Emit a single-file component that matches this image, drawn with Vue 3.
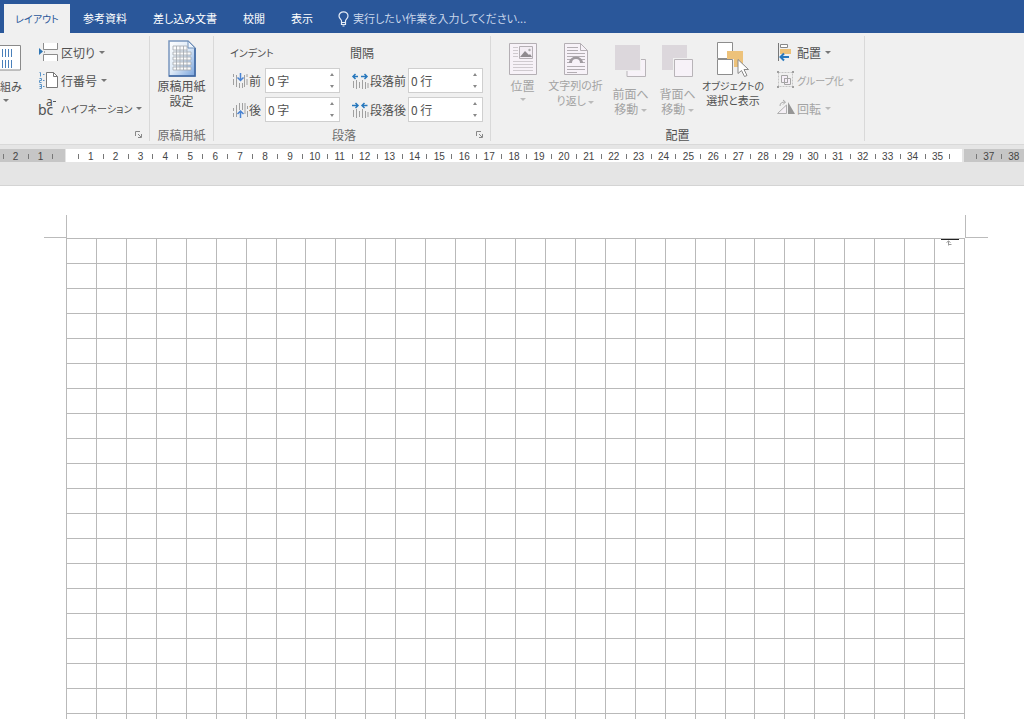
<script setup>
import { ref } from 'vue'

const tabs = ['参考資料', '差し込み文書', '校閲', '表示']

const indentBefore = ref('0 字')
const indentAfter = ref('0 字')
const spaceBefore = ref('0 行')
const spaceAfter = ref('0 行')

const withTicks = (from, to) => {
  const marks = ['tick']
  for (let n = from; n <= to; n++) marks.push(n, 'tick')
  return marks
}
const leftMarks = ['tick', 2, 'tick', 1, 'tick']
const bodyMarks = withTicks(1, 35)
const rightMarks = ['tick', 37, 'tick', 38]

const columns = 30
const rows = 20
</script>

<template>
  <div class="app">
    <nav class="tabs" aria-label="リボン タブ">
      <button class="tab active" type="button">レイアウト</button>
      <button v-for="t in tabs" :key="t" class="tab" type="button">{{ t }}</button>
      <label class="tell">
        <svg width="11" height="16" viewBox="0 0 11 16" fill="none" stroke="#e6edf7" stroke-width="1.2">
          <path d="M3.5 11.5V10C3.5 8.5 1 7.500 1 5a4.500 4.200 0 0 1 9 0C10 7.500 7.500 8.500 7.500 10v1.500zM3.500 11.500v2h4v-2M4.500 15h2" />
        </svg>
        <input type="text" aria-label="操作アシスト" placeholder="実行したい作業を入力してください..." />
      </label>
    </nav>

    <header class="ribbon">
      <section class="group page-setup">
        <div class="body">
          <button class="big cols" type="button">
            <svg width="21" height="26" viewBox="0 0 21 26">
              <path d="M-3 .5H20.500V25H-3" fill="#fff" stroke="#8a8a8a" />
              <path d="M2.500 4v8M5.500 4v8M8.500 4v8M11.500 4v8M2.500 15v8M5.500 15v8M8.500 15v8M11.500 15v8" stroke="#4a80ba" />
            </svg>
            <span>組み</span>
            <i class="arrow"></i>
          </button>
          <div class="stack">
            <button class="small" type="button">
              <svg width="20" height="20" viewBox="0 0 20 20">
                <path d="M4.500 1v6.500h14V1M4.500 19v-6.500h14V19" fill="#fff" stroke="#8c8c8c" />
                <path d="M0 6l4 3.500-4 3.500z" fill="#2f76b5" /><path d="M5 10h1" stroke="#666" />
              </svg>
              <span>区切り</span><i class="arrow"></i>
            </button>
            <button class="small" type="button">
              <svg width="20" height="20" viewBox="0 0 20 20">
                <path d="M7.500 2.500h7l4 4v11h-11z" fill="#fff" stroke="#777" />
                <path d="M14.500 2.500v4h4" fill="none" stroke="#777" />
                <path d="M.5 2.500h1v4M.5 8.500h2v2h-2v2h2M.5 14.500h2v4h-2M.5 16.500h2M4 4.500h1.500M4 10.500h1.500M4 16.500h1.500" fill="none" stroke="#5a94c8" />
              </svg>
              <span>行番号</span><i class="arrow"></i>
            </button>
            <button class="small" type="button">
              <svg width="20" height="20" viewBox="0 0 20 20" class="hyph">
                <text x="-1" y="17">bc</text><text x="7" y="8" class="sm">a</text>
                <path d="M14 3.500h3" stroke="#555" />
              </svg>
              <span class="kana">ハイフネーション</span><i class="arrow"></i>
            </button>
          </div>
        </div>
        <footer>
          <button class="launch" type="button" aria-label="ページ設定">
            <svg width="7" height="7" viewBox="0 0 7 7" fill="none" stroke="#888"><path d="M.5 5V.5H5M3 3l3 3M6.500 3v3.500H3" /></svg>
          </button>
        </footer>
      </section>

      <section class="group paper">
        <div class="body">
          <button class="big" type="button">
            <svg width="28" height="37" viewBox="0 0 28 37">
              <defs>
                <linearGradient id="sheet" x1="0" y1="0" x2="1" y2="1">
                  <stop offset="0" stop-color="#fff" /><stop offset=".5" stop-color="#dce9f7" /><stop offset="1" stop-color="#78a3dc" />
                </linearGradient>
              </defs>
              <path d="M1 1h19l7 7v28H1z" fill="url(#sheet)" stroke="#7895bd" stroke-width="1.500" />
              <path d="M27 8v28H1" fill="none" stroke="#3e67a3" stroke-width="1.500" />
              <path d="M20 1v7h7z" fill="#eef5fd" stroke="#7090b8" />
              <g fill="#fbfbfb" stroke="#a3a8ae" stroke-width=".8">
                <path d="M5 6h14v4H5zM5 12h18v3H5zM5 17h18v3H5zM5 22h18v3H5zM5 27h18v3H5z" />
                <path d="M8.500 6v24M12 6v24M15.500 6v24M19 10v20" />
              </g>
            </svg>
            <span>原稿用紙<br />設定</span>
          </button>
        </div>
        <footer>原稿用紙</footer>
      </section>

      <section class="group paragraph">
        <div class="body">
          <div class="fields indent">
            <h2 class="kana">インデント</h2>
            <label for="ib">
              <svg width="16" height="16" viewBox="0 0 16 16"><path d="M1.500 1v3M1.500 6v6M4.500 2v12M12.500 2v12M15 1v3M15 6v6M7.500 10v5M10.500 10v5" stroke="#a0a0a0" /><path d="M8.500 0v7M5.500 4.500l3 3 3-3" fill="none" stroke="#4a83d2" stroke-width="1.500" /></svg>前
            </label>
            <div class="spin"><input id="ib" v-model="indentBefore" type="text" /><span><button type="button" aria-label="増やす"></button><button class="down" type="button" aria-label="減らす"></button></span></div>
            <label for="ia">
              <svg width="16" height="16" viewBox="0 0 16 16"><path d="M1.500 6v3M1.500 11v4M4.500 3v12M7.500 1v7M10.500 1v7M13 1v11M15.500 4v3M15.500 9v6" stroke="#a0a0a0" /><path d="M8.500 16V9M5.500 12l3-3 3 3" fill="none" stroke="#4a83d2" stroke-width="1.500" /></svg>後
            </label>
            <div class="spin"><input id="ia" v-model="indentAfter" type="text" /><span><button type="button" aria-label="増やす"></button><button class="down" type="button" aria-label="減らす"></button></span></div>
          </div>
          <div class="fields spacing">
            <h2>間隔</h2>
            <label for="sb">
              <svg width="17" height="16" viewBox="0 0 17 16"><path d="M1.500 8v7M4.500 7v9M7.500 9v6M10.500 7v9M13.500 9v7M16 10v5" stroke="#a0a0a0" /><path d="M6 3.500H1M3.500 1L1 3.500 3.500 6M9 3.500h6M12.500 1L15 3.500 12.500 6" fill="none" stroke="#2878bd" stroke-width="1.500" /></svg>段落前
            </label>
            <div class="spin"><input id="sb" v-model="spaceBefore" type="text" /><span><button type="button" aria-label="増やす"></button><button class="down" type="button" aria-label="減らす"></button></span></div>
            <label for="sa">
              <svg width="17" height="16" viewBox="0 0 17 16"><path d="M1.500 8v7M4.500 7v9M7.500 9v6M10.500 7v9M13.500 9v7M16 10v5" stroke="#a0a0a0" /><path d="M0 3.500h6M3.500 1L6 3.500 3.500 6M15.500 3.500H10M12.500 1L10 3.500 12.500 6" fill="none" stroke="#2878bd" stroke-width="1.500" /></svg>段落後
            </label>
            <div class="spin"><input id="sa" v-model="spaceAfter" type="text" /><span><button type="button" aria-label="増やす"></button><button class="down" type="button" aria-label="減らす"></button></span></div>
          </div>
        </div>
        <footer>段落
          <button class="launch" type="button" aria-label="段落の設定">
            <svg width="7" height="7" viewBox="0 0 7 7" fill="none" stroke="#888"><path d="M.5 5V.5H5M3 3l3 3M6.500 3v3.500H3" /></svg>
          </button>
        </footer>
      </section>

      <section class="group arrange">
        <div class="body">
          <button class="big pos" type="button" disabled>
            <svg width="28" height="34" viewBox="0 0 28 34">
              <path d="M.5 1.500h27v31H.5z" fill="#f7f2f8" stroke="#b4afb4" />
              <path d="M4 5.500h5M4 8.500h5M4 11.500h5M4 14.500h5M4 19.500h20M4 22.500h20M4 25.500h20M4 28.500h20" stroke="#cfcacf" />
              <path d="M10.500 4.500h13v12h-13z" fill="#f3edf4" stroke="#b4afb4" />
              <path d="M11 15l5-6 4 4 1-1 2 3z" fill="#8f8a8f" /><circle cx="20.500" cy="8" r="1.200" fill="#aaa" />
            </svg>
            <span>位置</span><i class="arrow"></i>
          </button>
          <button class="big wrap" type="button" disabled>
            <svg width="26" height="34" viewBox="0 0 26 34">
              <path d="M1.500 1.500h16l7 7v24h-23z" fill="#f7f2f8" stroke="#b4afb4" /><path d="M17.500 1.500v7h7" fill="none" stroke="#b4afb4" />
              <path d="M4 5.500h11M4 8.500h11M4 11.500h18M4 14.500h18M4 17.500h4M18 17.500h4M4 20.500h3M19 20.500h3M4 24.500h18M4 27.500h18M4 30.500h10" stroke="#b3aeb3" />
              <path d="M6 21a7 6.500 0 0 1 14 0h-3a4 4 0 0 0-8 0z" fill="#a09ba0" />
            </svg>
            <span class="mixed">文字列の折<br />り返し <i class="arrow"></i></span>
          </button>
          <button class="big layer" type="button" disabled>
            <svg width="31" height="34" viewBox="0 0 31 34">
              <path d="M12 15.500h18.500v17H12z" fill="#f7f2f8" stroke="#b8b4b8" /><path d="M0 0h26v27H0z" fill="#f0f0f0" /><path d="M0 1h25v25H0z" fill="#dcd7dc" />
            </svg>
            <span>前面へ<br />移動 <i class="arrow"></i></span>
          </button>
          <button class="big layer" type="button" disabled>
            <svg width="31" height="34" viewBox="0 0 31 34">
              <path d="M0 1h25v25H0z" fill="#dcd7dc" /><path d="M11 14h20v20H11z" fill="#f0f0f0" /><path d="M12.500 15.500h18v17h-18z" fill="#f7f2f8" stroke="#b8b4b8" />
            </svg>
            <span>背面へ<br />移動 <i class="arrow"></i></span>
          </button>
          <button class="big select" type="button">
            <svg width="32" height="36" viewBox="0 0 32 36">
              <path d="M.5 .5h15v16H.5zM.5 17.500h15v15H.5z" fill="#fff" stroke="#8d8d8d" />
              <path d="M10 9h16v16h-9v-8h-7z" fill="#edc27a" />
              <path d="M21 17.500v14l3.500-3 3 6 2.500-1-3-6h4.500z" fill="#fff" stroke="#888" />
            </svg>
            <span class="kana">オブジェクトの</span><span class="mixed">選択と表示</span>
          </button>
          <div class="stack">
            <button class="small" type="button">
              <svg width="18" height="18" viewBox="0 0 18 18">
                <path d="M1.500 0v18" stroke="#777" /><path d="M3.500 1.500h7v3h-7z" fill="#fff" stroke="#888" /><path d="M3 6h11v5H3z" fill="#edc27a" />
                <path d="M12 14H4M7 10.500L3.500 14 7 17.500" fill="none" stroke="#2878bd" stroke-width="2" />
              </svg>
              <span>配置</span><i class="arrow"></i>
            </button>
            <button class="small" type="button" disabled>
              <svg width="18" height="18" viewBox="0 0 18 18">
                <path d="M1.500 1.500h14v14h-14z" fill="none" stroke="#c4c4c4" stroke-dasharray="2 1" />
                <path d="M4.500 4.500h6v7h-6zM7.500 7.500h6v6h-6z" fill="#f5eef7" stroke="#a5a5a5" /><path d="M7.500 7.500h3v4h-3z" fill="none" stroke="#a5a5a5" />
                <path d="M0 0h2v2H0zM15 0h2v2h-2zM0 15h2v2H0zM15 15h2v2h-2z" fill="#a0a0a0" />
              </svg>
              <span class="kana">グループ化</span><i class="arrow"></i>
            </button>
            <button class="small" type="button" disabled>
              <svg width="18" height="18" viewBox="0 0 18 18">
                <path d="M9.500 6v8.500H.5z" fill="#f5f0f6" stroke="#b0b0b0" /><path d="M11 3l7 12h-7z" fill="#969696" />
                <path d="M3 7c0-3 2-4 5-4M6 1l2.500 2L6 5.500" fill="none" stroke="#aaa" />
              </svg>
              <span>回転</span><i class="arrow"></i>
            </button>
          </div>
        </div>
        <footer>配置</footer>
      </section>
    </header>

    <div class="ruler" aria-label="ルーラー">
      <div class="margin left"><div><span v-for="(m, i) in leftMarks" :key="i" :class="{ tick: m === 'tick' }">{{ m === 'tick' ? '' : m }}</span></div></div>
      <div class="scale"><span v-for="(m, i) in bodyMarks" :key="i" :class="{ tick: m === 'tick' }">{{ m === 'tick' ? '' : m }}</span></div>
      <div class="margin right"><div><span v-for="(m, i) in rightMarks" :key="i" :class="{ tick: m === 'tick' }">{{ m === 'tick' ? '' : m }}</span></div></div>
    </div>

    <main class="page">
      <div class="crops"><i></i><i></i></div>
      <div class="manuscript">
        <template v-for="r in rows" :key="r">
          <div v-for="c in columns" :key="c" class="cell">
            <span v-if="r === 1 && c === columns" class="mark">
              <svg width="18" height="8" viewBox="0 0 18 8" fill="none"><path d="M0 1.500h18" stroke="#222" /><path d="M7.500 7.500V3M5.500 4.500l2-1.500 2 1.500M7.500 6.500h3" stroke="#999" /></svg>
            </span>
          </div>
        </template>
      </div>
    </main>
  </div>
</template>

<style>
html, body { margin: 0; background: #fff; overflow: hidden; }
</style>

<style scoped>
.app {
  display: flex; flex-direction: column; height: 100vh; overflow: hidden;
  font: 12px/15px "Noto Sans CJK JP", sans-serif; color: #505050; font-feature-settings: "palt";
}
svg { display: block; flex: none; overflow: visible; }
button, input { font: inherit; color: inherit; font-feature-settings: inherit; border: 0; padding: 0; margin: 0; background: none; border-radius: 0; }
h2 { margin: 0; font: inherit; }
.kana, h2.kana { font-size: 10px; }
.mixed { font-size: 11px; }

.tabs { display: flex; flex: none; height: 33px; padding-left: 4px; background: #2a579a; color: #fff; align-items: flex-end; box-sizing: border-box; }
.tab { height: 29px; padding: 0 13px; white-space: nowrap; font-size: 11px; }
.tab.active { width: 66px; padding: 0; background: #f0f0f0; color: #2a579a; font-size: 10px; }
.tell { display: flex; flex: 1; align-items: center; gap: 4px; height: 29px; margin-left: 12px; font-size: 11px; }
.tell input { flex: 1; min-width: 0; outline: none; }
.tell input::placeholder { color: #c9d6ea; opacity: 1; }

.ribbon { display: flex; flex: none; height: 111px; background: #f0f0f0; padding: 3px 0 3px; box-sizing: border-box; }
.group { display: flex; flex-direction: column; justify-content: space-between; flex: none; border-right: 1px solid #d9d9d9; box-sizing: border-box; }
.body { display: flex; padding-top: 2px; }
.group footer { display: flex; justify-content: center; align-items: center; height: 15px; margin-bottom: -1px; color: #6e6e6e; position: relative; }
.launch { position: absolute; right: 7px; top: 4px; }
.page-setup { width: 150px; }
.paper { width: 64px; }
.paragraph { width: 277px; }
.paragraph footer { padding-right: 16px; }
.arrange { width: 374px; }
.arrange footer { color: #505050; }

.arrow { display: inline-block; flex: none; border: 3px solid transparent; border-top-color: #777; border-bottom: 0; vertical-align: middle; }
:disabled { color: #a3a3a3; }
:disabled .arrow { border-top-color: #bbb; }

.big { display: flex; flex: none; flex-direction: column; align-items: center; text-align: center; white-space: nowrap; line-height: 15px; }
.big > svg { margin-bottom: 1px; }
.paper .big { width: 100%; padding-top: 2px; }
.big.cols { width: 21px; padding-top: 7px; align-items: flex-start; }
.cols > svg { margin-bottom: 8px; }
.cols .arrow { margin: 5px 0 0 3px; }
.cols span { font-size: 11px; }
.stack { display: flex; flex-direction: column; }
.small { display: flex; align-items: center; gap: 2px; height: 28px; white-space: nowrap; }
.small .arrow { margin-left: 2px; }
.page-setup .stack { margin-left: 18px; }
.hyph text { font: 14px "Noto Sans", sans-serif; fill: #505050; }
.hyph .sm { font-size: 12px; }

.paragraph .body { padding-left: 16px; gap: 10px; }
.fields { display: grid; grid-template-rows: 28px; grid-auto-rows: 29px; align-items: center; }
.fields h2 { grid-column: 1 / -1; }
.indent { grid-template-columns: 35px 75px; }
.spacing { grid-template-columns: 58px 75px; }
.fields label { display: flex; align-items: center; gap: 1px; padding-left: 2px; white-space: nowrap; }
.spin { display: flex; height: 25px; border: 1px solid #cfcfcf; background: #fff; box-sizing: border-box; }
.spin input { flex: 1; min-width: 0; padding-left: 2px; outline: none; }
.spin span { display: flex; flex-direction: column; width: 14px; }
.spin button { display: grid; place-items: center; flex: 1; }
.spin button::before { content: ""; border: 2px solid transparent; border-bottom: 3px solid #888; border-top: 0; }
.spin .down::before { border-top: 3px solid #888; border-bottom: 0; }

.arrange .body { padding-left: 10px; }
.arrange .big { padding-top: 4px; }
.arrange .pos { width: 43px; }
.pos .arrow { margin-top: 5px; }
.pos > svg, .wrap > svg { margin-bottom: 2px; }
.arrange .wrap { width: 63px; }
.arrange .layer { width: 47px; padding-top: 6px; }
.layer > svg { margin-bottom: 8px; }
.arrange .select { width: 60px; margin-left: 2px; }
.select > svg { margin-bottom: 0; }
.arrange .stack { margin-left: 14px; }

.ruler { display: flex; flex: none; height: 42px; padding: 4px 0 23px; box-sizing: border-box; background: #e5e5e5; border-top: 1px solid #d9d9d9; border-bottom: 1px solid #d4d4d4; font: 10px/16px "Liberation Sans", sans-serif; color: #444; }
.margin { display: flex; background: #c6c6c6; }
.margin.left { width: 65px; margin-right: 1px; justify-content: flex-end; padding-right: 6px; box-sizing: border-box; }
.margin.right { width: 60px; margin-left: 2px; padding-left: 6px; box-sizing: border-box; overflow: hidden; }
.left div { display: flex; flex: none; width: 62px; }
.right div { display: flex; flex: none; width: 50px; }
.scale { display: flex; flex: 1; padding: 0 6px; background: #fff; min-width: 0; }
.ruler span { flex: 1 1 0; min-width: 0; display: flex; justify-content: center; }
.tick::before { content: ""; width: 1px; height: 5px; margin-top: 5px; background: #777; }

.page { flex: 1; min-height: 0; overflow: hidden; padding: 29px 36px 0 44px; }
.crops { display: flex; justify-content: space-between; }
.crops i { width: 22px; height: 22px; border: 0 solid #bbb; border-width: 0 1px 1px 0; }
.crops i + i { border-width: 0 0 1px 1px; }
.manuscript { display: grid; grid-template-columns: repeat(30, 1fr); grid-auto-rows: 25px; margin: 0 23px 0 22px; border-right: 1px solid #b9b9b9; }
.cell { border: 0 solid #b9b9b9; border-width: 1px 0 0 1px; position: relative; }
.mark { position: absolute; left: 6px; top: -1px; }
</style>
